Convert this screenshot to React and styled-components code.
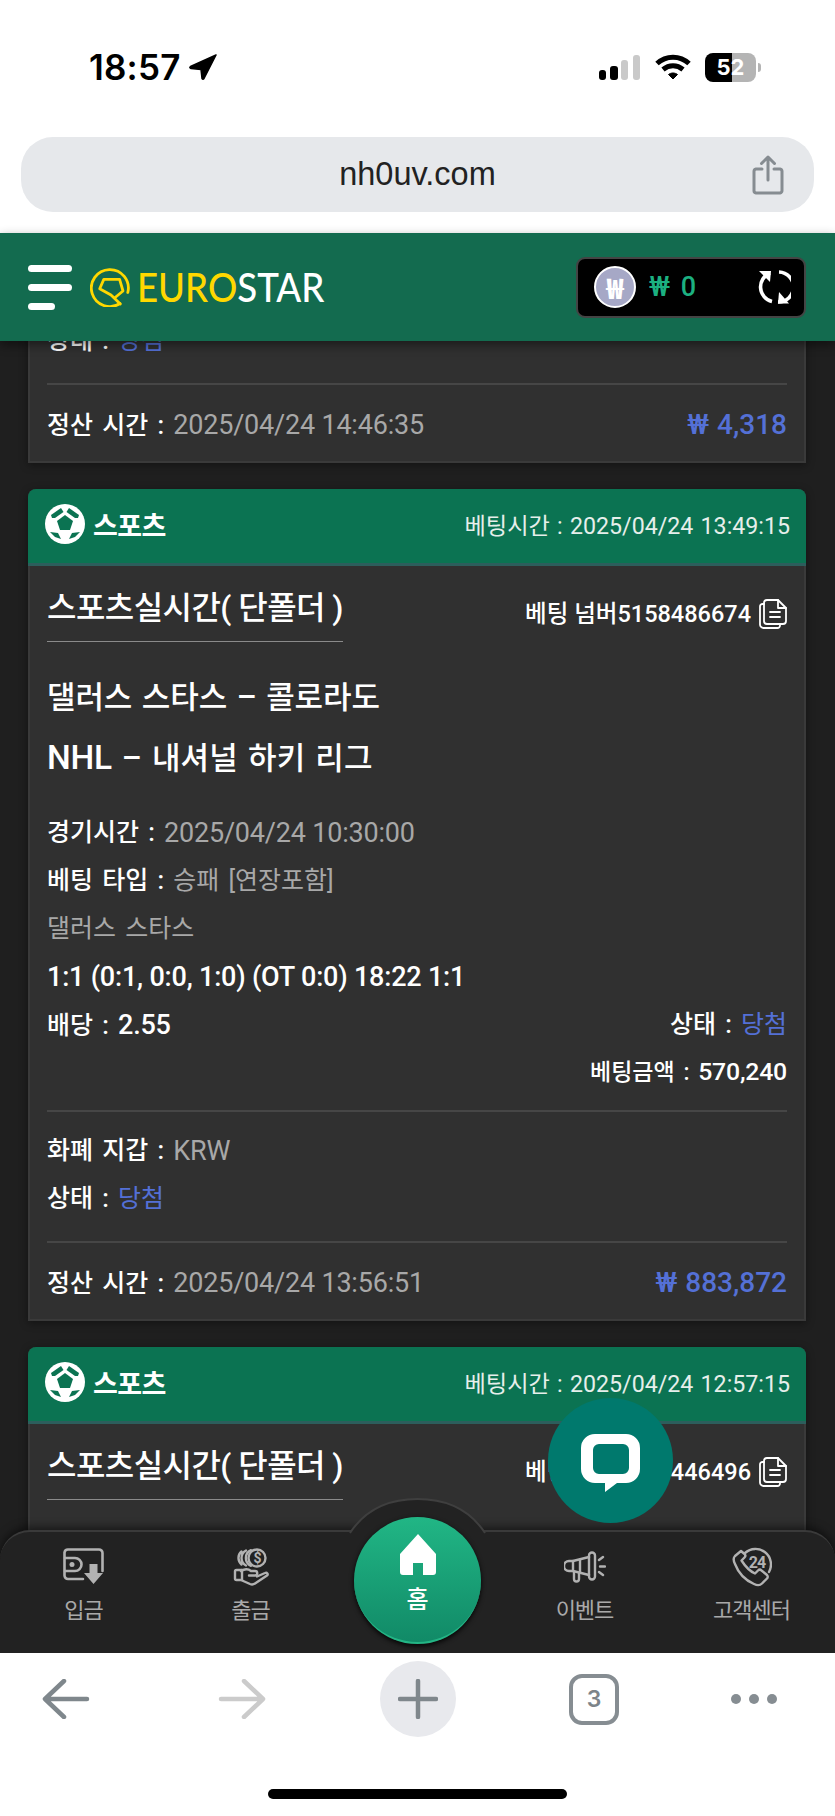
import React from 'react';
import styled, { createGlobalStyle } from 'styled-components';

const FONT = `Roboto, "Noto Sans CJK KR", "Liberation Sans", sans-serif`;

const GlobalStyle = createGlobalStyle`
  html, body { margin: 0; padding: 0; background: #fff; }
  * { box-sizing: border-box; }
  #root { width: 835px; height: 1816px; }
`;

const Screen = styled.div`
  width: 835px;
  height: 1816px;
  display: flex;
  flex-direction: column;
  overflow: hidden;
  font-family: ${FONT};
  background: #fff;
`;

/* ---------- phone + browser chrome ---------- */

const TopChrome = styled.div`
  flex: 0 0 233px;
  background: #fff;
`;

const StatusBar = styled.div`
  height: 137px;
  display: flex;
  align-items: center;
  justify-content: space-between;
  padding: 0 79px 3px 89px;
`;

const Clock = styled.div`
  display: flex;
  align-items: center;
  gap: 8px;
  font-family: Inter, sans-serif;
  font-size: 35px;
  font-weight: 600;
  letter-spacing: 0.2px;
  color: #000;
`;

const Indicators = styled.div`
  display: flex;
  align-items: center;
  gap: 14px;
`;

const Battery = styled.div`
  width: 51px;
  height: 29px;
  border-radius: 8px;
  background: linear-gradient(90deg, #000 0 53%, #b4b4b4 53% 100%);
  color: #fff;
  font-family: Inter, sans-serif;
  font-size: 22px;
  font-weight: 700;
  line-height: 29px;
  text-align: center;
  position: relative;
  &::after {
    content: '';
    position: absolute;
    right: -5px;
    top: 10px;
    width: 3px;
    height: 9px;
    border-radius: 0 3px 3px 0;
    background: #b4b4b4;
  }
`;

const UrlBar = styled.div`
  height: 75px;
  margin: 0 21px;
  border-radius: 32px;
  background: #e6e8eb;
  display: flex;
  align-items: center;
  justify-content: center;
  position: relative;
  font-family: "Liberation Sans", sans-serif;
  font-size: 32.5px;
  color: #222;
`;

const ShareSlot = styled.div`
  position: absolute;
  right: 30px;
  top: 18px;
  display: flex;
`;

const BottomChrome = styled.div`
  flex: 0 0 163px;
  background: #fff;
  display: flex;
  flex-direction: column;
  align-items: center;
`;

const Toolbar = styled.div`
  width: 100%;
  height: 92px;
  display: flex;
  align-items: center;
  gap: 100px;
  padding: 0 0 0 28px;
`;

const ToolButton = styled.div`
  width: 76px;
  height: 76px;
  flex: 0 0 76px;
  display: flex;
  align-items: center;
  justify-content: center;
  border-radius: 50%;
  background: ${({ $filled }) => ($filled ? '#e8e9ed' : 'transparent')};
  margin-left: ${({ $nudge }) => $nudge || 0}px;
`;

const TabCount = styled.div`
  width: 50px;
  height: 51px;
  border: 4px solid #868d92;
  border-radius: 13px;
  display: flex;
  align-items: center;
  justify-content: center;
  color: #7d8489;
  font-family: Inter, sans-serif;
  font-size: 23px;
  font-weight: 600;
`;

const HomeIndicator = styled.div`
  width: 299px;
  height: 10px;
  margin-top: 44px;
  border-radius: 5px;
  background: #000;
`;

/* ---------- site header ---------- */

const SiteHeader = styled.header`
  flex: 0 0 108px;
  display: flex;
  align-items: center;
  justify-content: space-between;
  padding: 0 29px 0 28px;
  background: #136b4f;
  box-shadow: 0 4px 10px rgba(0, 0, 0, 0.45);
  position: relative;
  z-index: 3;
`;

const Brand = styled.div`
  display: flex;
  align-items: center;
  gap: 18px;
`;

const Burger = styled.div`
  width: 44px;
  display: flex;
  flex-direction: column;
  gap: 12px;
`;

const BurgerBar = styled.span`
  display: block;
  height: 7px;
  border-radius: 4px;
  background: #fff;
  width: ${({ $w }) => $w}px;
`;

const Logo = styled.div`
  display: flex;
  align-items: center;
  gap: 7px;
`;

/* the wordmark is a condensed face, so squeeze Lato sideways */
const LogoText = styled.div`
  font-family: Lato, sans-serif;
  font-size: 40px;
  font-weight: 500;
  color: #fff;
  line-height: 1;
  transform: scaleX(0.915);
  transform-origin: left center;
  span { color: #ffd800; }
`;

const Wallet = styled.div`
  width: 230px;
  height: 61px;
  background: #000;
  border: 2px solid #444;
  border-radius: 9px;
  display: flex;
  align-items: center;
  padding: 0 13px 0 16px;
`;

const Coin = styled.div`
  width: 42px;
  height: 42px;
  border-radius: 50%;
  border: 2px solid #fff;
  background: #a6a8c6;
  display: flex;
  align-items: center;
  justify-content: center;
  color: #fff;
  font-family: "Noto Sans CJK KR", sans-serif;
  font-size: 28px;
  font-weight: 900;
`;

const Balance = styled.div`
  margin-left: 13px;
  flex: 1;
  color: #1cb080;
  font-size: 27px;
  font-weight: 500;
  word-spacing: 4px;
`;

/* ---------- bet list ---------- */

const Main = styled.main`
  flex: 1;
  min-height: 0;
  position: relative;
  overflow: hidden;
  background: #1f1f1f;
`;

const BetList = styled.div`
  margin-top: -23px;
  padding: 0 29px 0 28px;
  display: flex;
  flex-direction: column;
  gap: 26px;
`;

const Card = styled.section`
  background: #303030;
  border: solid #3a3a3a;
  border-width: 0 2px 2px;
  border-radius: 8px 8px 0 0;
  box-shadow: 0 2px 8px rgba(0, 0, 0, 0.4);
`;

const CardHead = styled.div`
  height: 77px;
  margin: 0 -2px;
  padding: 0 16px 4px 17px;
  border-radius: 8px 8px 0 0;
  border-bottom: 3px solid #2c5e5c;
  background: #0b7352;
  display: flex;
  align-items: center;
  justify-content: space-between;
`;

const HeadKind = styled.div`
  display: flex;
  align-items: center;
  gap: 8px;
  color: #fff;
  font-size: 27px;
  font-weight: 700;
  letter-spacing: -0.6px;
`;

const HeadTime = styled.div`
  color: #e6efeb;
  font-size: 23.2px;
  word-spacing: 1.5px;
`;

const CardBody = styled.div`
  padding: 0 17px;
  height: ${({ $height }) => ($height ? `${$height}px` : 'auto')};
`;

const TitleRow = styled.div`
  display: flex;
  justify-content: space-between;
  align-items: flex-start;
  padding-top: 24px;
`;

const Title = styled.h3`
  margin: 0;
  height: 52px;
  width: 296px;
  border-bottom: 1px solid #8a8a8a;
  color: #fff;
  font-size: 32px;
  line-height: 36px;
  font-weight: 500;
  letter-spacing: -0.55px;
  white-space: nowrap;
`;

const BetNumber = styled.div`
  display: flex;
  align-items: center;
  gap: 8px;
  margin-top: 6px;
  color: #fff;
  font-size: 23.5px;
  line-height: 36px;
  font-weight: 500;
  white-space: nowrap;
`;

const Matches = styled.div`
  margin-top: 26px;
  margin-bottom: 21px;
`;

const MatchLine = styled.div`
  color: #fff;
  font-size: 31px;
  line-height: 60px;
  font-weight: 500;
  letter-spacing: ${({ $wide }) => ($wide ? 0.2 : -0.1)}px;
  word-spacing: 2px;
`;

const Row = styled.div`
  height: ${({ $h }) => $h || 48}px;
  line-height: ${({ $h }) => ($h || 48) - 2}px;
  display: flex;
  justify-content: ${({ $between, $end }) =>
    $between ? 'space-between' : $end ? 'flex-end' : 'flex-start'};
  font-size: ${({ $small }) => ($small ? 23 : 25)}px;
  word-spacing: 3px;
  white-space: nowrap;
  color: #fff;
`;

const Strong = styled.span`
  font-weight: 500;
  color: #fff;
  white-space: pre;
`;

const Muted = styled.span`
  color: #a8a8a8;
`;

const Won = styled.span`
  color: #5470d6;
`;

/* latin + digits run a little larger next to hangul */
const Num = styled.span`
  font-size: 1.08em;
  letter-spacing: -0.2px;
  word-spacing: 0;
`;

const Amount = styled.span`
  color: #5470d6;
  font-size: 28px;
  font-weight: 500;
  word-spacing: 1px;
`;

const Divider = styled.hr`
  margin: ${({ $top }) => $top}px 0 ${({ $bottom }) => $bottom}px;
  border: 0;
  height: 2px;
  background: #464646;
`;

const FootRow = styled(Row)`
  height: 76px;
  line-height: 76px;
  align-items: flex-start;
  padding-top: 2px;
`;

/* ---------- floating chat + bottom nav ---------- */

const ChatFab = styled.div`
  position: absolute;
  z-index: 4;
  left: 548px;
  bottom: 130px;
  width: 125px;
  height: 125px;
  border-radius: 50%;
  background: #00796d;
  display: flex;
  align-items: center;
  justify-content: center;
`;

const BottomNav = styled.nav`
  position: absolute;
  z-index: 2;
  left: 0;
  right: 0;
  bottom: 0;
  height: 123px;
  display: flex;
  background: #222;
  border-radius: 30px 30px 0 0;
  border-top: 2px solid #3a3a3a;
  box-shadow: 0 -3px 8px rgba(0, 0, 0, 0.5);
`;

const NavItem = styled.div`
  flex: 1;
  display: flex;
  flex-direction: column;
  align-items: center;
  padding-top: 15px;
  color: #a9a9a9;
  font-size: 22px;
  letter-spacing: -1px;
`;

const NavIcon = styled.div`
  height: 40px;
  display: flex;
  align-items: center;
  justify-content: center;
`;

const NavLabel = styled.div`
  margin-top: 9px;
  line-height: 30px;
`;

const HomeSlot = styled.div`
  flex: 1;
  position: relative;
`;

const Arch = styled.svg`
  position: absolute;
  left: 15px;
  top: -34px;
`;

const HomeButton = styled.div`
  position: absolute;
  left: 20px;
  top: -15px;
  width: 127px;
  height: 127px;
  border-radius: 50%;
  background: linear-gradient(180deg, #21b685 0%, #118a67 100%);
  border-bottom: 2px solid #23b585;
  box-shadow: 0 2px 5px rgba(0, 0, 0, 0.9);
  display: flex;
  flex-direction: column;
  align-items: center;
  padding-top: 17px;
  color: #fff;
  font-size: 24px;
  font-weight: 500;
`;

const HomeLabel = styled.div`
  margin-top: 11px;
  line-height: 28px;
`;

/* ---------- drawings ---------- */

const LocationArrow = () => (
  <svg width="28" height="26" viewBox="0 0 28 26">
    <path d="M27 1 1.5 12.5Q0 13.5 2 14.5L12 15.5 13 24.5Q14 26 15 24.5Z" fill="#000" stroke="#000" strokeWidth="1.5" strokeLinejoin="round" />
  </svg>
);

const Signal = () => (
  <svg width="42" height="25" viewBox="0 0 42 25">
    <rect x="0" y="15" width="7" height="10" rx="3" fill="#000" />
    <rect x="11" y="11" width="8" height="14" rx="3" fill="#000" />
    <rect x="22" y="5" width="7" height="20" rx="3" fill="#c9c9c9" />
    <rect x="34" y="0" width="7" height="25" rx="3" fill="#c9c9c9" />
  </svg>
);

const Wifi = () => (
  <svg width="36" height="26" viewBox="0 0 36 26" fill="none" stroke="#000" strokeWidth="5">
    <path d="M2 9.5C11 1 25 1 34 9.5" />
    <path d="M8 15.5c6-5 14-5 20 0" />
    <path d="M13.5 20.5 18 25l4.5-4.5c-2.5-2-6.5-2-9 0z" fill="#000" strokeWidth="1" />
  </svg>
);

const ShareIcon = () => (
  <svg width="32" height="40" viewBox="0 0 32 40" fill="none" stroke="#868c91" strokeWidth="3" strokeLinecap="round" strokeLinejoin="round">
    <path d="M10 14H4a2.5 2.5 0 0 0-2 2.5v19A2.5 2.5 0 0 0 4 38h24a2.5 2.5 0 0 0 2-2.5v-19A2.5 2.5 0 0 0 28 14h-6" />
    <path d="M16 25V2M9.5 8.5 16 2l6.5 6.5" />
  </svg>
);

const LogoMark = () => (
  <svg width="40" height="40" viewBox="0 0 40 40" fill="none" stroke="#ffd800" strokeWidth="2.8" strokeLinejoin="round" strokeLinecap="round">
    <path d="M30 36.5A18.5 18.5 0 1 1 37.8 25.5" />
    <path d="M24.5 31 33 24 29.6 12.4H13.8L9.7 21.7 21 28 30.3 37" />
  </svg>
);

const RefreshIcon = () => (
  <svg width="34" height="34" viewBox="0 0 34 34" fill="none" stroke="#fff" strokeWidth="3.6">
    <path d="M13 3A15 15 0 0 0 15 31.5" />
    <path d="M22 2A15 15 0 0 1 21 32" />
    <path d="M2 1H14L13 12z" fill="#fff" stroke="none" />
    <path d="M22 22 32 33.5H21z" fill="#fff" stroke="none" />
  </svg>
);

const SoccerBall = () => (
  <svg width="40" height="40" viewBox="0 0 40 40">
    <circle cx="20" cy="20" r="20" fill="#fff" />
    <g fill="#0b7352">
      <path d="M20 11 28 17 25 26H15L12 17z" />
      <path d="M6 11 16 4 18.5 8 10 14H7z" />
      <path d="M34 11 24 4 21.5 8 30 14H33z" />
      <path d="M5 28 13 29 16 35 10 33z" />
      <path d="M35 28 27 29 24 35 30 33z" />
    </g>
  </svg>
);

const CopyIcon = () => (
  <svg width="28" height="30" viewBox="0 0 28 30" fill="none" stroke="#fff" strokeWidth="1.8" strokeLinejoin="round" strokeLinecap="round">
    <path d="M5 5H3.5A2.5 2.5 0 0 0 1 7.5v18A3.5 3.5 0 0 0 4.5 29h14a2.500 2.500 0 0 0 2.500-2.500V25" />
    <path d="M8 1h11l8 8v13a3 3 0 0 1-3 3H8a3 3 0 0 1-3-3V4a3 3 0 0 1 3-3z" />
    <path d="M19 1v8h8M11 13h10M11 18h10" />
  </svg>
);

const ChatBubble = () => (
  <svg width="60" height="60" viewBox="0 0 60 60" style={{ marginTop: 4 }}>
    <path
      fillRule="evenodd"
      fill="#fff"
      d="M14 1h31a14 14 0 0 1 14 14v21a14 14 0 0 1-14 14h-9L24 59v-9H14A14 14 0 0 1 0 36V15A14 14 0 0 1 14 1zM18 11a6 6 0 0 0-6 6v18a6 6 0 0 0 6 6h24a6 6 0 0 0 6-6V17a6 6 0 0 0-6-6z"
    />
  </svg>
);

const WalletDown = () => (
  <svg width="42" height="38" viewBox="0 0 42 38" fill="none" stroke="#b2b2b2" strokeWidth="2.6" strokeLinecap="round">
    <path d="M20 31H5a3.5 3.5 0 0 1-3.5-3.5v-23A3.5 3.5 0 0 1 5 1.5h31a3.5 3.5 0 0 1 3.5 3.5v18" />
    <path d="M2 10h10a6.5 6.5 0 0 1 0 13H2" />
    <circle cx="9" cy="16.5" r="2.5" fill="#b2b2b2" stroke="none" />
    <path d="M26.5 16h8v9h5.5l-9.5 11-9.5-11h5.5z" fill="#b2b2b2" stroke="none" />
  </svg>
);

const HandCoin = () => (
  <svg width="36" height="38" viewBox="0 0 36 38" fill="none" stroke="#b2b2b2" strokeWidth="2.4" strokeLinecap="round" strokeLinejoin="round">
    <circle cx="24" cy="10" r="8.5" />
    <path d="M18 2.2a8.5 8.5 0 0 0 0 15.6M13 2.5a8.5 8.5 0 0 0 0 15M8.5 3.5a8.5 8.5 0 0 0 0 13" />
    <text x="24" y="15" textAnchor="middle" fontFamily="Roboto, sans-serif" fontSize="14" fontWeight="700" fill="#b2b2b2" stroke="none">$</text>
    <path d="M9 22H3.5A1.5 1.5 0 0 0 2 23.5v7A1.5 1.5 0 0 0 3.5 32H8l9 4c2 .8 3.5.5 5-.5l12-8c1.5-1.2 0-3.5-2-2.5l-8 3.5" />
    <path d="M8 23c4-2.5 7-2.5 10 0h4c3 0 3 4.5 0 4.5h-6" />
    <path d="M9 22v10" />
  </svg>
);

const Megaphone = () => (
  <svg width="42" height="32" viewBox="0 0 42 32" fill="none" stroke="#b2b2b2" strokeWidth="2.4" strokeLinecap="round" strokeLinejoin="round">
    <path d="M25 6 9 10H5a4.5 4.5 0 0 0 0 10h4l16 4" />
    <rect x="25" y="1.5" width="6" height="27" rx="3" />
    <path d="M9 10v10M16 8.5v13M10 21v7a2.5 2.5 0 0 0 5 0v-6" />
    <path d="M35 9l4-3M36 15.5h5M35 21l4 3" />
  </svg>
);

const Phone24 = () => (
  <svg width="40" height="40" viewBox="0 0 40 40" fill="none" stroke="#b2b2b2" strokeWidth="2.4" strokeLinecap="round" strokeLinejoin="round">
    <path d="M13 6A15.5 15.5 0 0 1 37 25" />
    <path d="M9 4 3 9c-2 2-1.5 5 0 8 3 8 10 16 19 20 3 1.5 6 1.5 8-.5l5-5c1-1 1-2.5 0-3.5l-5.5-4.5c-1-1-2.5-1-3.5 0l-3 3C17.5 24 13 19 9.5 13.5l3-3c1-1 1-2.5 0-3.5L9 4z" />
    <text x="25" y="21" textAnchor="middle" fontFamily="Roboto, sans-serif" fontSize="16" fontWeight="700" fill="#b2b2b2" stroke="none">24</text>
  </svg>
);

const HomeGlyph = () => (
  <svg width="38" height="41" viewBox="0 0 38 41">
    <path d="M19 0 37 20v18a3 3 0 0 1-3 3H24V29H14v12H4a3 3 0 0 1-3-3V20z" fill="#fff" />
  </svg>
);

const ArrowIcon = ({ color, flip }) => (
  <svg width="48" height="40" viewBox="0 0 48 40" fill="none" stroke={color} strokeWidth="4.5" strokeLinecap="round" strokeLinejoin="round" style={flip ? { transform: 'scaleX(-1)' } : undefined}>
    <path d="M22 2 3 20l19 18M3 20h42" />
  </svg>
);

const PlusIcon = () => (
  <svg width="40" height="40" viewBox="0 0 40 40" stroke="#7f878c" strokeWidth="4.5" strokeLinecap="round">
    <path d="M20 2v36M2 20h36" />
  </svg>
);

const DotsIcon = () => (
  <svg width="48" height="12" viewBox="0 0 48 12" fill="#868d92">
    <circle cx="6" cy="6" r="5" />
    <circle cx="24" cy="6" r="5" />
    <circle cx="42" cy="6" r="5" />
  </svg>
);

/* ---------- page parts ---------- */

const Settlement = ({ time, amount }) => (
  <FootRow $between>
    <span>
      <Strong>정산 시간 : </Strong>
      <Muted>
        <Num>{time}</Num>
      </Muted>
    </span>
    <Amount>₩ {amount}</Amount>
  </FootRow>
);

const NAV = [
  { label: '입금', Icon: WalletDown },
  { label: '출금', Icon: HandCoin },
  null,
  { label: '이벤트', Icon: Megaphone },
  { label: '고객센터', Icon: Phone24 },
];

const CardHeader = ({ time }) => (
  <CardHead>
    <HeadKind>
      <SoccerBall />
      스포츠
    </HeadKind>
    <HeadTime>베팅시간 : {time}</HeadTime>
  </CardHead>
);

const CardTitle = ({ number }) => (
  <TitleRow>
    <Title>스포츠실시간( 단폴더 )</Title>
    <BetNumber>
      베팅 넘버{number}
      <CopyIcon />
    </BetNumber>
  </TitleRow>
);

export default function App() {
  return (
    <Screen>
      <GlobalStyle />
      <TopChrome>
        <StatusBar>
          <Clock>
            18:57
            <LocationArrow />
          </Clock>
          <Indicators>
            <Signal />
            <Wifi />
            <Battery>52</Battery>
          </Indicators>
        </StatusBar>
        <UrlBar>
          nh0uv.com
          <ShareSlot>
            <ShareIcon />
          </ShareSlot>
        </UrlBar>
      </TopChrome>

      <SiteHeader>
        <Brand>
          <Burger>
            <BurgerBar $w={44} />
            <BurgerBar $w={44} />
            <BurgerBar $w={27} />
          </Burger>
          <Logo>
            <LogoMark />
            <LogoText>
              <span>EURO</span>STAR
            </LogoText>
          </Logo>
        </Brand>
        <Wallet>
          <Coin>₩</Coin>
          <Balance>₩ 0</Balance>
          <RefreshIcon />
        </Wallet>
      </SiteHeader>

      <Main>
        <BetList>
          <Card>
            <CardBody>
              <Row>
                <Strong>상태 : </Strong>
                <Won>당첨</Won>
              </Row>
              <Divider $top={17} $bottom={0} />
              <Settlement time="2025/04/24 14:46:35" amount="4,318" />
            </CardBody>
          </Card>

          <Card>
            <CardHeader time="2025/04/24 13:49:15" />
            <CardBody>
              <CardTitle number="5158486674" />
              <Matches>
                <MatchLine>댈러스 스타스 – 콜로라도</MatchLine>
                <MatchLine $wide>
                  <Num>NHL</Num> – 내셔널 하키 리그
                </MatchLine>
              </Matches>
              <Row>
                <Strong>경기시간 : </Strong>
                <Muted>
                  <Num>2025/04/24 10:30:00</Num>
                </Muted>
              </Row>
              <Row>
                <Strong>베팅 타입 : </Strong>
                <Muted>승패 [연장포함]</Muted>
              </Row>
              <Row>
                <Muted>댈러스 스타스</Muted>
              </Row>
              <Row>
                <Strong>
                  <Num>1:1 (0:1, 0:0, 1:0) (OT 0:0) 18:22 1:1</Num>
                </Strong>
              </Row>
              <Row $between>
                <Strong>
                  배당 : <Num>2.55</Num>
                </Strong>
                <span>
                  <Strong>상태 : </Strong>
                  <Won>당첨</Won>
                </span>
              </Row>
              <Row $end $small $h={46}>
                <Strong>
                  베팅금액 : <Num>570,240</Num>
                </Strong>
              </Row>
              <Divider $top={14} $bottom={16} />
              <Row>
                <Strong>화폐 지갑 : </Strong>
                <Muted>
                  <Num>KRW</Num>
                </Muted>
              </Row>
              <Row>
                <Strong>상태 : </Strong>
                <Won>당첨</Won>
              </Row>
              <Divider $top={17} $bottom={0} />
              <Settlement time="2025/04/24 13:56:51" amount="883,872" />
            </CardBody>
          </Card>

          <Card>
            <CardHeader time="2025/04/24 12:57:15" />
            <CardBody $height={260}>
              <CardTitle number="5158446496" />
            </CardBody>
          </Card>
        </BetList>

        <ChatFab>
          <ChatBubble />
        </ChatFab>

        <BottomNav>
          {NAV.map((item, i) =>
            item ? (
              <NavItem key={item.label}>
                <NavIcon>
                  <item.Icon />
                </NavIcon>
                <NavLabel>{item.label}</NavLabel>
              </NavItem>
            ) : (
              <HomeSlot key={i}>
                <Arch width="137" height="36" viewBox="0 0 137 36" fill="#222" stroke="#3f3f3f" strokeWidth="2">
                  <path d="M1 35C16 12 40 1 68.5 1S121 12 136 35" />
                </Arch>
                <HomeButton>
                  <HomeGlyph />
                  <HomeLabel>홈</HomeLabel>
                </HomeButton>
              </HomeSlot>
            )
          )}
        </BottomNav>
      </Main>

      <BottomChrome>
        <Toolbar>
          <ToolButton>
            <ArrowIcon color="#7f878c" />
          </ToolButton>
          <ToolButton>
            <ArrowIcon color="#cbcbcb" flip />
          </ToolButton>
          <ToolButton $filled>
            <PlusIcon />
          </ToolButton>
          <ToolButton>
            <TabCount>3</TabCount>
          </ToolButton>
          <ToolButton $nudge={-16}>
            <DotsIcon />
          </ToolButton>
        </Toolbar>
        <HomeIndicator />
      </BottomChrome>
    </Screen>
  );
}
